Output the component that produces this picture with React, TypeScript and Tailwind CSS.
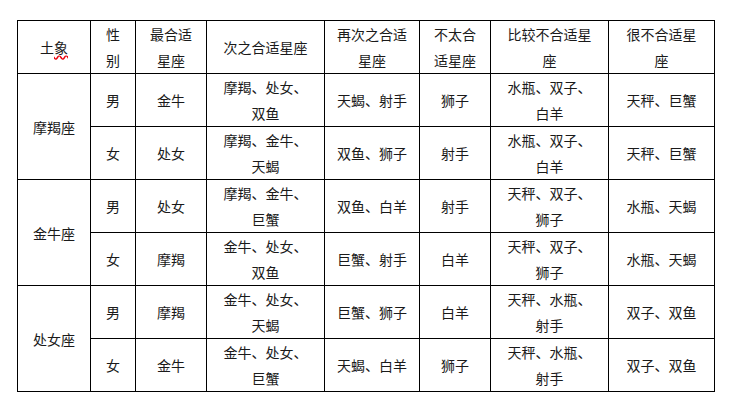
import React from 'react';

const cols = [73, 45, 71, 118, 95, 71, 118, 106];

type Row = { sign?: string; gender: string; cells: string[][] };

const header: string[][] = [
  ['土象'],
  ['性', '别'],
  ['最合适', '星座'],
  ['次之合适星座'],
  ['再次之合适', '星座'],
  ['不太合', '适星座'],
  ['比较不合适星', '座'],
  ['很不合适星', '座'],
];

const rows: Row[] = [
  { sign: '摩羯座', gender: '男', cells: [['金牛'], ['摩羯、处女、', '双鱼'], ['天蝎、射手'], ['狮子'], ['水瓶、双子、', '白羊'], ['天秤、巨蟹']] },
  { gender: '女', cells: [['处女'], ['摩羯、金牛、', '天蝎'], ['双鱼、狮子'], ['射手'], ['水瓶、双子、', '白羊'], ['天秤、巨蟹']] },
  { sign: '金牛座', gender: '男', cells: [['处女'], ['摩羯、金牛、', '巨蟹'], ['双鱼、白羊'], ['射手'], ['天秤、双子、', '狮子'], ['水瓶、天蝎']] },
  { gender: '女', cells: [['摩羯'], ['金牛、处女、', '双鱼'], ['巨蟹、射手'], ['白羊'], ['天秤、双子、', '狮子'], ['水瓶、天蝎']] },
  { sign: '处女座', gender: '男', cells: [['摩羯'], ['金牛、处女、', '天蝎'], ['巨蟹、狮子'], ['白羊'], ['天秤、水瓶、', '射手'], ['双子、双鱼']] },
  { gender: '女', cells: [['金牛'], ['金牛、处女、', '巨蟹'], ['天蝎、白羊'], ['狮子'], ['天秤、水瓶、', '射手'], ['双子、双鱼']] },
];

const heights = [53, 53, 53, 52, 53, 53, 52];

function Lines({ lines }: { lines: string[] }) {
  return (
    <>
      {lines.map((l, i) => (
        <div key={i} className="whitespace-nowrap">{l}</div>
      ))}
    </>
  );
}

const td = 'border border-black text-center align-middle p-0';

export default function App() {
  return (
    <div className="w-[735px] h-[410px] bg-white pt-[20px] pl-[17px] text-[14px] leading-[26px] text-[#1a1a1a] font-['Noto_Sans_CJK_SC',sans-serif]">
      <table className="table-fixed border-collapse border border-black w-[698px]">
        <colgroup>
          {cols.map((w, i) => (
            <col key={i} style={{ width: w }} />
          ))}
        </colgroup>
        <tbody>
          <tr style={{ height: heights[0] }}>
            <td className={td}>
              土<span className="underline decoration-wavy decoration-red-600 underline-offset-2">象</span>
            </td>
            {header.slice(1).map((h, i) => (
              <td key={i} className={td}>
                <Lines lines={h} />
              </td>
            ))}
          </tr>
          {rows.map((r, ri) => (
            <tr key={ri} style={{ height: heights[ri + 1] }}>
              {r.sign && (
                <td rowSpan={2} className={td}>
                  {r.sign}
                </td>
              )}
              <td className={td}>{r.gender}</td>
              {r.cells.map((c, ci) => (
                <td key={ci} className={td}>
                  <Lines lines={c} />
                </td>
              ))}
            </tr>
          ))}
        </tbody>
      </table>
    </div>
  );
}
